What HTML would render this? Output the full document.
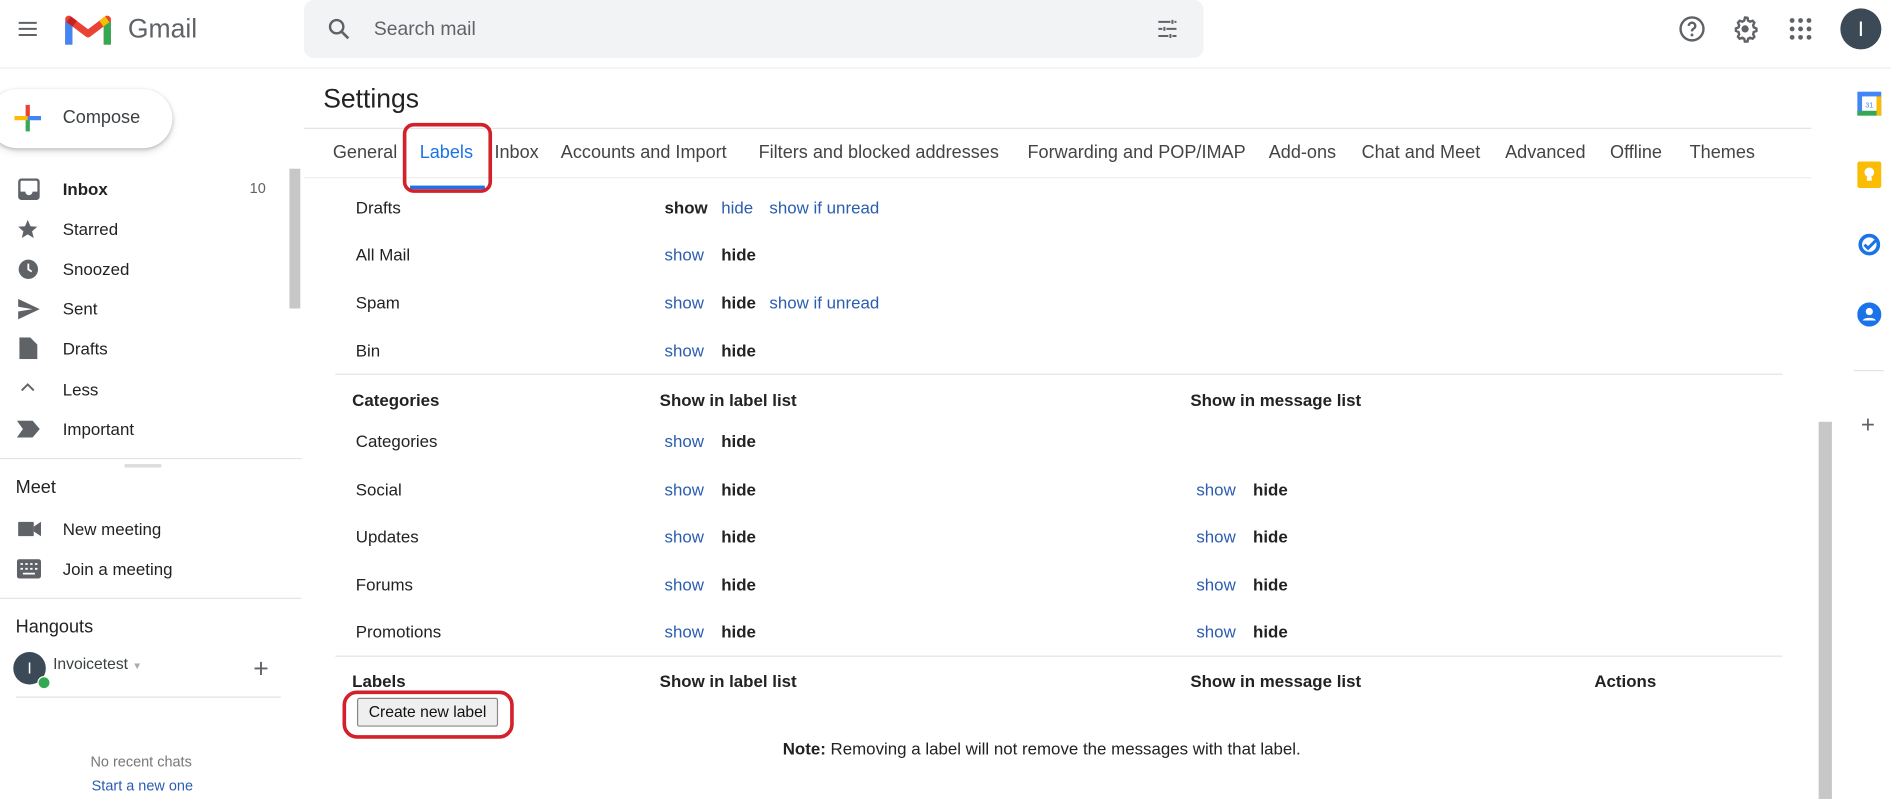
<!DOCTYPE html>
<html><head><meta charset="utf-8"><style>
html,body{margin:0;padding:0;width:1891px;height:799px;overflow:hidden;background:#fff;font-family:"Liberation Sans",Arial,sans-serif;}
#w{position:absolute;left:0;top:0;width:1568px;height:663px;transform:scale(1.206,1.2051);transform-origin:0 0;}
.t{position:absolute;line-height:20px;transform:translateY(-50%);white-space:nowrap;color:#222;font-size:14px;}
.l{color:#2a5db0}
.b{font-weight:bold}
.g{color:#5f6368}
.hr{position:absolute;height:1px;background:#e3e3e3}
.ic{position:absolute}
</style></head><body><div id="w">
<!-- header -->
<svg class="ic" style="left:13px;top:14px" width="20" height="20" viewBox="0 0 24 24"><path d="M3 6h18M3 12h18M3 18h18" stroke="#5f6368" stroke-width="2"/></svg>
<svg class="ic" style="left:54px;top:10px" width="38" height="28" viewBox="0 0 38 28">
<path d="M3 27V6l16 12L35 6v21" fill="none" stroke="#ea4335" stroke-width="6" stroke-linejoin="round"/>
<path d="M3 27V8" stroke="#4285f4" stroke-width="6"/><path d="M35 27V8" stroke="#34a853" stroke-width="6"/>
<path d="M30 9.5L35 6" stroke="#fbbc04" stroke-width="6"/><path d="M3 6l5 3.7" stroke="#c5221f" stroke-width="6"/></svg>
<div class="t g" style="left:106px;top:24px;font-size:22px;line-height:28px">Gmail</div>
<div style="position:absolute;left:252px;top:0;width:746px;height:48px;background:#f1f3f4;border-radius:8px"></div>
<svg class="ic" style="left:270px;top:13px" width="22" height="22" viewBox="0 0 24 24"><circle cx="10" cy="10" r="6" fill="none" stroke="#5f6368" stroke-width="2.2"/><path d="M14.5 14.5l6 6" stroke="#5f6368" stroke-width="2.4"/></svg>
<div class="t g" style="left:310px;top:25px;font-size:16px">Search mail</div>
<svg class="ic" style="left:958px;top:14px" width="20" height="20" viewBox="0 0 24 24"><path d="M3 5h12M19 5h2M3 12h4M11 12h10M3 19h10M17 19h4M17 3v4M9 10v4M15 17v4" stroke="#5f6368" stroke-width="2" fill="none"/></svg>
<svg class="ic" style="left:1391px;top:12px" width="24" height="24" viewBox="0 0 24 24"><circle cx="12" cy="12" r="9.5" fill="none" stroke="#5f6368" stroke-width="2"/><path d="M9.3 9.5a2.7 2.7 0 1 1 3.7 2.5c-.8.4-1 1-1 2" fill="none" stroke="#5f6368" stroke-width="2"/><circle cx="12" cy="17" r="1.2" fill="#5f6368"/></svg>
<svg class="ic" style="left:1435px;top:12px" width="24" height="24" viewBox="0 0 24 24"><path d="M12 2.5l2 .3.5 2.3 1.6.9 2.2-.8 1.4 1.6-1 2.1.5 1.8 2.2 1v2l-2.2.9-.5 1.8 1 2.1-1.4 1.6-2.2-.8-1.6.9-.5 2.3h-2.2l-.5-2.3-1.6-.9-2.2.8-1.4-1.6 1-2.1-.5-1.8-2.2-1v-2l2.2-.9.5-1.8-1-2.1 1.4-1.6 2.2.8 1.6-.9.5-2.3z" fill="none" stroke="#5f6368" stroke-width="2"/><circle cx="12" cy="12" r="3" fill="#5f6368"/></svg>
<svg class="ic" style="left:1482px;top:13px" width="22" height="22" viewBox="0 0 22 22" fill="#5f6368"><circle cx="4" cy="4" r="2"/><circle cx="11" cy="4" r="2"/><circle cx="18" cy="4" r="2"/><circle cx="4" cy="11" r="2"/><circle cx="11" cy="11" r="2"/><circle cx="18" cy="11" r="2"/><circle cx="4" cy="18" r="2"/><circle cx="11" cy="18" r="2"/><circle cx="18" cy="18" r="2"/></svg>
<div style="position:absolute;left:1526px;top:7px;width:34px;height:34px;border-radius:50%;background:#3c4a57;color:#fff;font-size:18px;line-height:34px;text-align:center">I</div>
<div class="hr" style="left:0;top:56px;width:1568px;background:#eee"></div>
<!-- compose -->
<div style="position:absolute;left:-10px;top:74px;width:153px;height:49px;border-radius:25px;background:#fff;box-shadow:0 1px 3px rgba(60,64,67,.3),0 3px 6px rgba(60,64,67,.15)"></div>
<svg class="ic" style="left:10px;top:85px" width="26" height="26" viewBox="0 0 26 26"><path d="M13 2v11" stroke="#ea4335" stroke-width="3.5"/><path d="M13 13v11" stroke="#34a853" stroke-width="3.5"/><path d="M2 13h11" stroke="#fbbc04" stroke-width="3.5"/><path d="M13 13h11" stroke="#4285f4" stroke-width="3.5"/></svg>
<div class="t" style="left:52px;top:98px;font-size:15px;color:#3c4043">Compose</div>
<!-- sidebar -->
<svg class="ic" style="left:15px;top:148px" width="18" height="18" viewBox="0 0 18 18"><rect x="1" y="1" width="16" height="16" rx="2" fill="none" stroke="#5f6368" stroke-width="2"/><path d="M1 11h5a3 3 0 0 0 6 0h5v6H1z" fill="#5f6368"/></svg>
<div class="t b" style="left:52px;top:157px">Inbox</div><div class="t g" style="left:207px;top:156px;font-size:12px">10</div>
<svg class="ic" style="left:14px;top:181px" width="18" height="18" viewBox="0 0 24 24"><path d="M12 2l3 7 7.5.6-5.7 5 1.8 7.4L12 18l-6.6 4 1.8-7.4-5.7-5L9 9z" fill="#5f6368"/></svg>
<div class="t" style="left:52px;top:190px">Starred</div>
<svg class="ic" style="left:15px;top:215px" width="17" height="17" viewBox="0 0 18 18"><circle cx="9" cy="9" r="8.5" fill="#5f6368"/><path d="M9 4v5l3 2" stroke="#fff" stroke-width="1.6" fill="none"/></svg>
<div class="t" style="left:52px;top:223px">Snoozed</div>
<svg class="ic" style="left:15px;top:248px" width="18" height="17" viewBox="0 0 18 17"><path d="M0 0l18 8.5L0 17v-6.5l12-2-12-2z" fill="#5f6368"/></svg>
<div class="t" style="left:52px;top:256px">Sent</div>
<svg class="ic" style="left:16px;top:280px" width="15" height="18" viewBox="0 0 15 18"><path d="M0 0h9l6 6v12H0z" fill="#5f6368"/></svg>
<div class="t" style="left:52px;top:289px">Drafts</div>
<svg class="ic" style="left:17px;top:317px" width="12" height="8" viewBox="0 0 12 8"><path d="M1 7l5-5 5 5" stroke="#5f6368" stroke-width="1.6" fill="none"/></svg>
<div class="t" style="left:52px;top:323px">Less</div>
<svg class="ic" style="left:14px;top:349px" width="19" height="14" viewBox="0 0 19 14"><path d="M0 0h13l6 7-6 7H0l5-7z" fill="#5f6368"/></svg>
<div class="t" style="left:52px;top:356px">Important</div>
<div style="position:absolute;left:240px;top:140px;width:9px;height:116px;background:#c7c7c7"></div>
<div class="hr" style="left:0;top:380px;width:250px"></div>
<div style="position:absolute;left:103px;top:385px;width:31px;height:3px;background:#ddd;border-radius:2px"></div>
<div class="t" style="left:13px;top:405px;font-size:15px">Meet</div>
<svg class="ic" style="left:15px;top:433px" width="19" height="12" viewBox="0 0 19 12"><rect x="0" y="0" width="13" height="12" rx="1" fill="#5f6368"/><path d="M13 4l6-4v12l-6-4z" fill="#5f6368"/></svg>
<div class="t" style="left:52px;top:439px">New meeting</div>
<svg class="ic" style="left:14px;top:464px" width="20" height="16" viewBox="0 0 20 16"><rect x="0" y="0" width="20" height="16" rx="2" fill="#5f6368"/><path d="M3 4h2M7 4h2M11 4h2M15 4h2M3 8h2M7 8h2M11 8h2M15 8h2M5 12h10" stroke="#fff" stroke-width="1.5"/></svg>
<div class="t" style="left:52px;top:472px">Join a meeting</div>
<div class="hr" style="left:0;top:496px;width:250px"></div>
<div class="t" style="left:13px;top:521px;font-size:15px">Hangouts</div>
<div style="position:absolute;left:11px;top:541px;width:27px;height:27px;border-radius:50%;background:#3c4a57;color:#fff;font-size:13px;line-height:27px;text-align:center">I</div>
<div style="position:absolute;left:31px;top:561px;width:9px;height:9px;border-radius:50%;background:#34a853;border:1px solid #fff"></div>
<div class="t" style="left:44px;top:552px;font-size:13px;color:#3c4043">Invoicetest <span style="color:#aaa;font-size:8px">▼</span></div>
<div class="t g" style="left:210px;top:555px;font-size:22px;font-weight:300">+</div>
<div class="hr" style="left:13px;top:578px;width:220px"></div>
<div class="t" style="left:75px;top:632px;font-size:12px;color:#777">No recent chats</div>
<div class="t l" style="left:76px;top:652px;font-size:12px">Start a new one</div>
<!-- settings -->
<div class="t" style="left:268px;top:82px;font-size:22px;line-height:28px">Settings</div>
<div class="hr" style="left:252px;top:106px;width:1250px"></div>
<div class="t" style="left:276px;top:127px;font-size:15px;color:#444">General</div>
<div class="t" style="left:348px;top:127px;font-size:15px;color:#1a73e8">Labels</div>
<div style="position:absolute;left:340px;top:154px;width:62px;height:3px;background:#1a73e8"></div>
<div class="t" style="left:410px;top:127px;font-size:15px;color:#444">Inbox</div>
<div class="t" style="left:465px;top:127px;font-size:15px;color:#444">Accounts and Import</div>
<div class="t" style="left:629px;top:127px;font-size:15px;color:#444">Filters and blocked addresses</div>
<div class="t" style="left:852px;top:127px;font-size:15px;color:#444">Forwarding and POP/IMAP</div>
<div class="t" style="left:1052px;top:127px;font-size:15px;color:#444">Add-ons</div>
<div class="t" style="left:1129px;top:127px;font-size:15px;color:#444">Chat and Meet</div>
<div class="t" style="left:1248px;top:127px;font-size:15px;color:#444">Advanced</div>
<div class="t" style="left:1335px;top:127px;font-size:15px;color:#444">Offline</div>
<div class="t" style="left:1401px;top:127px;font-size:15px;color:#444">Themes</div>
<div class="hr" style="left:252px;top:147px;width:1250px;background:#eee"></div>
<div style="position:absolute;left:334px;top:102px;width:68px;height:52px;border:3px solid #d3202a;border-radius:9px"></div>
<!-- rows -->
<div class="t" style="left:295px;top:172px">Drafts</div><div class="t b" style="left:551px;top:172px">show</div><div class="t l" style="left:598px;top:172px">hide</div><div class="t l" style="left:638px;top:172px">show if unread</div>
<div class="t" style="left:295px;top:211px">All Mail</div><div class="t l" style="left:551px;top:211px">show</div><div class="t b" style="left:598px;top:211px">hide</div>
<div class="t" style="left:295px;top:251px">Spam</div><div class="t l" style="left:551px;top:251px">show</div><div class="t b" style="left:598px;top:251px">hide</div><div class="t l" style="left:638px;top:251px">show if unread</div>
<div class="t" style="left:295px;top:291px">Bin</div><div class="t l" style="left:551px;top:291px">show</div><div class="t b" style="left:598px;top:291px">hide</div>
<div class="hr" style="left:278px;top:310px;width:1200px"></div>
<div class="t b" style="left:292px;top:332px">Categories</div><div class="t b" style="left:547px;top:332px">Show in label list</div><div class="t b" style="left:987px;top:332px">Show in message list</div>
<div class="t" style="left:295px;top:366px">Categories</div><div class="t l" style="left:551px;top:366px">show</div><div class="t b" style="left:598px;top:366px">hide</div>
<div class="t" style="left:295px;top:406px">Social</div><div class="t l" style="left:551px;top:406px">show</div><div class="t b" style="left:598px;top:406px">hide</div><div class="t l" style="left:992px;top:406px">show</div><div class="t b" style="left:1039px;top:406px">hide</div>
<div class="t" style="left:295px;top:445px">Updates</div><div class="t l" style="left:551px;top:445px">show</div><div class="t b" style="left:598px;top:445px">hide</div><div class="t l" style="left:992px;top:445px">show</div><div class="t b" style="left:1039px;top:445px">hide</div>
<div class="t" style="left:295px;top:485px">Forums</div><div class="t l" style="left:551px;top:485px">show</div><div class="t b" style="left:598px;top:485px">hide</div><div class="t l" style="left:992px;top:485px">show</div><div class="t b" style="left:1039px;top:485px">hide</div>
<div class="t" style="left:295px;top:524px">Promotions</div><div class="t l" style="left:551px;top:524px">show</div><div class="t b" style="left:598px;top:524px">hide</div><div class="t l" style="left:992px;top:524px">show</div><div class="t b" style="left:1039px;top:524px">hide</div>
<div class="hr" style="left:278px;top:544px;width:1200px"></div>
<div class="t b" style="left:292px;top:565px">Labels</div><div class="t b" style="left:547px;top:565px">Show in label list</div><div class="t b" style="left:987px;top:565px">Show in message list</div><div class="t b" style="left:1322px;top:565px">Actions</div>
<div style="position:absolute;left:296px;top:579px;width:115px;height:22px;border:1px solid #888;background:#efefef;border-radius:2px;font-size:13px;line-height:22px;text-align:center;color:#111">Create new label</div>
<div style="position:absolute;left:284px;top:573px;width:136px;height:34px;border:3px solid #d3202a;border-radius:12px"></div>
<div class="t" style="left:649px;top:621px"><b>Note:</b> Removing a label will not remove the messages with that label.</div>
<div style="position:absolute;left:1508px;top:350px;width:11px;height:313px;background:#c7c7c7"></div>
<!-- right panel -->
<svg class="ic" style="left:1540px;top:76px" width="20" height="20" viewBox="0 0 20 20"><rect x="0" y="0" width="20" height="20" fill="#4285f4"/><rect x="4" y="4" width="12" height="12" fill="#fff"/><rect x="16" y="4" width="4" height="16" fill="#fbbc04"/><rect x="0" y="16" width="16" height="4" fill="#34a853"/><text x="10" y="13" font-size="6" text-anchor="middle" fill="#4285f4" font-family="Liberation Sans">31</text></svg>
<svg class="ic" style="left:1540px;top:134px" width="20" height="22" viewBox="0 0 20 22"><rect x="0" y="0" width="20" height="22" rx="2" fill="#fbbc04"/><circle cx="10" cy="9" r="4" fill="#fff"/><rect x="8" y="13" width="4" height="3" fill="#fff"/></svg>
<svg class="ic" style="left:1540px;top:193px" width="20" height="20" viewBox="0 0 20 20"><circle cx="10" cy="10" r="7.5" fill="none" stroke="#1a73e8" stroke-width="3"/><path d="M6 10l3 3 8-8" fill="none" stroke="#1a73e8" stroke-width="2.5"/></svg>
<svg class="ic" style="left:1540px;top:251px" width="20" height="20" viewBox="0 0 20 20"><circle cx="10" cy="10" r="10" fill="#1a73e8"/><circle cx="10" cy="7.5" r="3" fill="#fff"/><path d="M4.5 15c1-3 10-3 11 0z" fill="#fff"/></svg>
<div class="hr" style="left:1537px;top:307px;width:25px"></div>
<div class="t g" style="left:1543px;top:353px;font-size:20px;font-weight:300">+</div>
</div></body></html>
